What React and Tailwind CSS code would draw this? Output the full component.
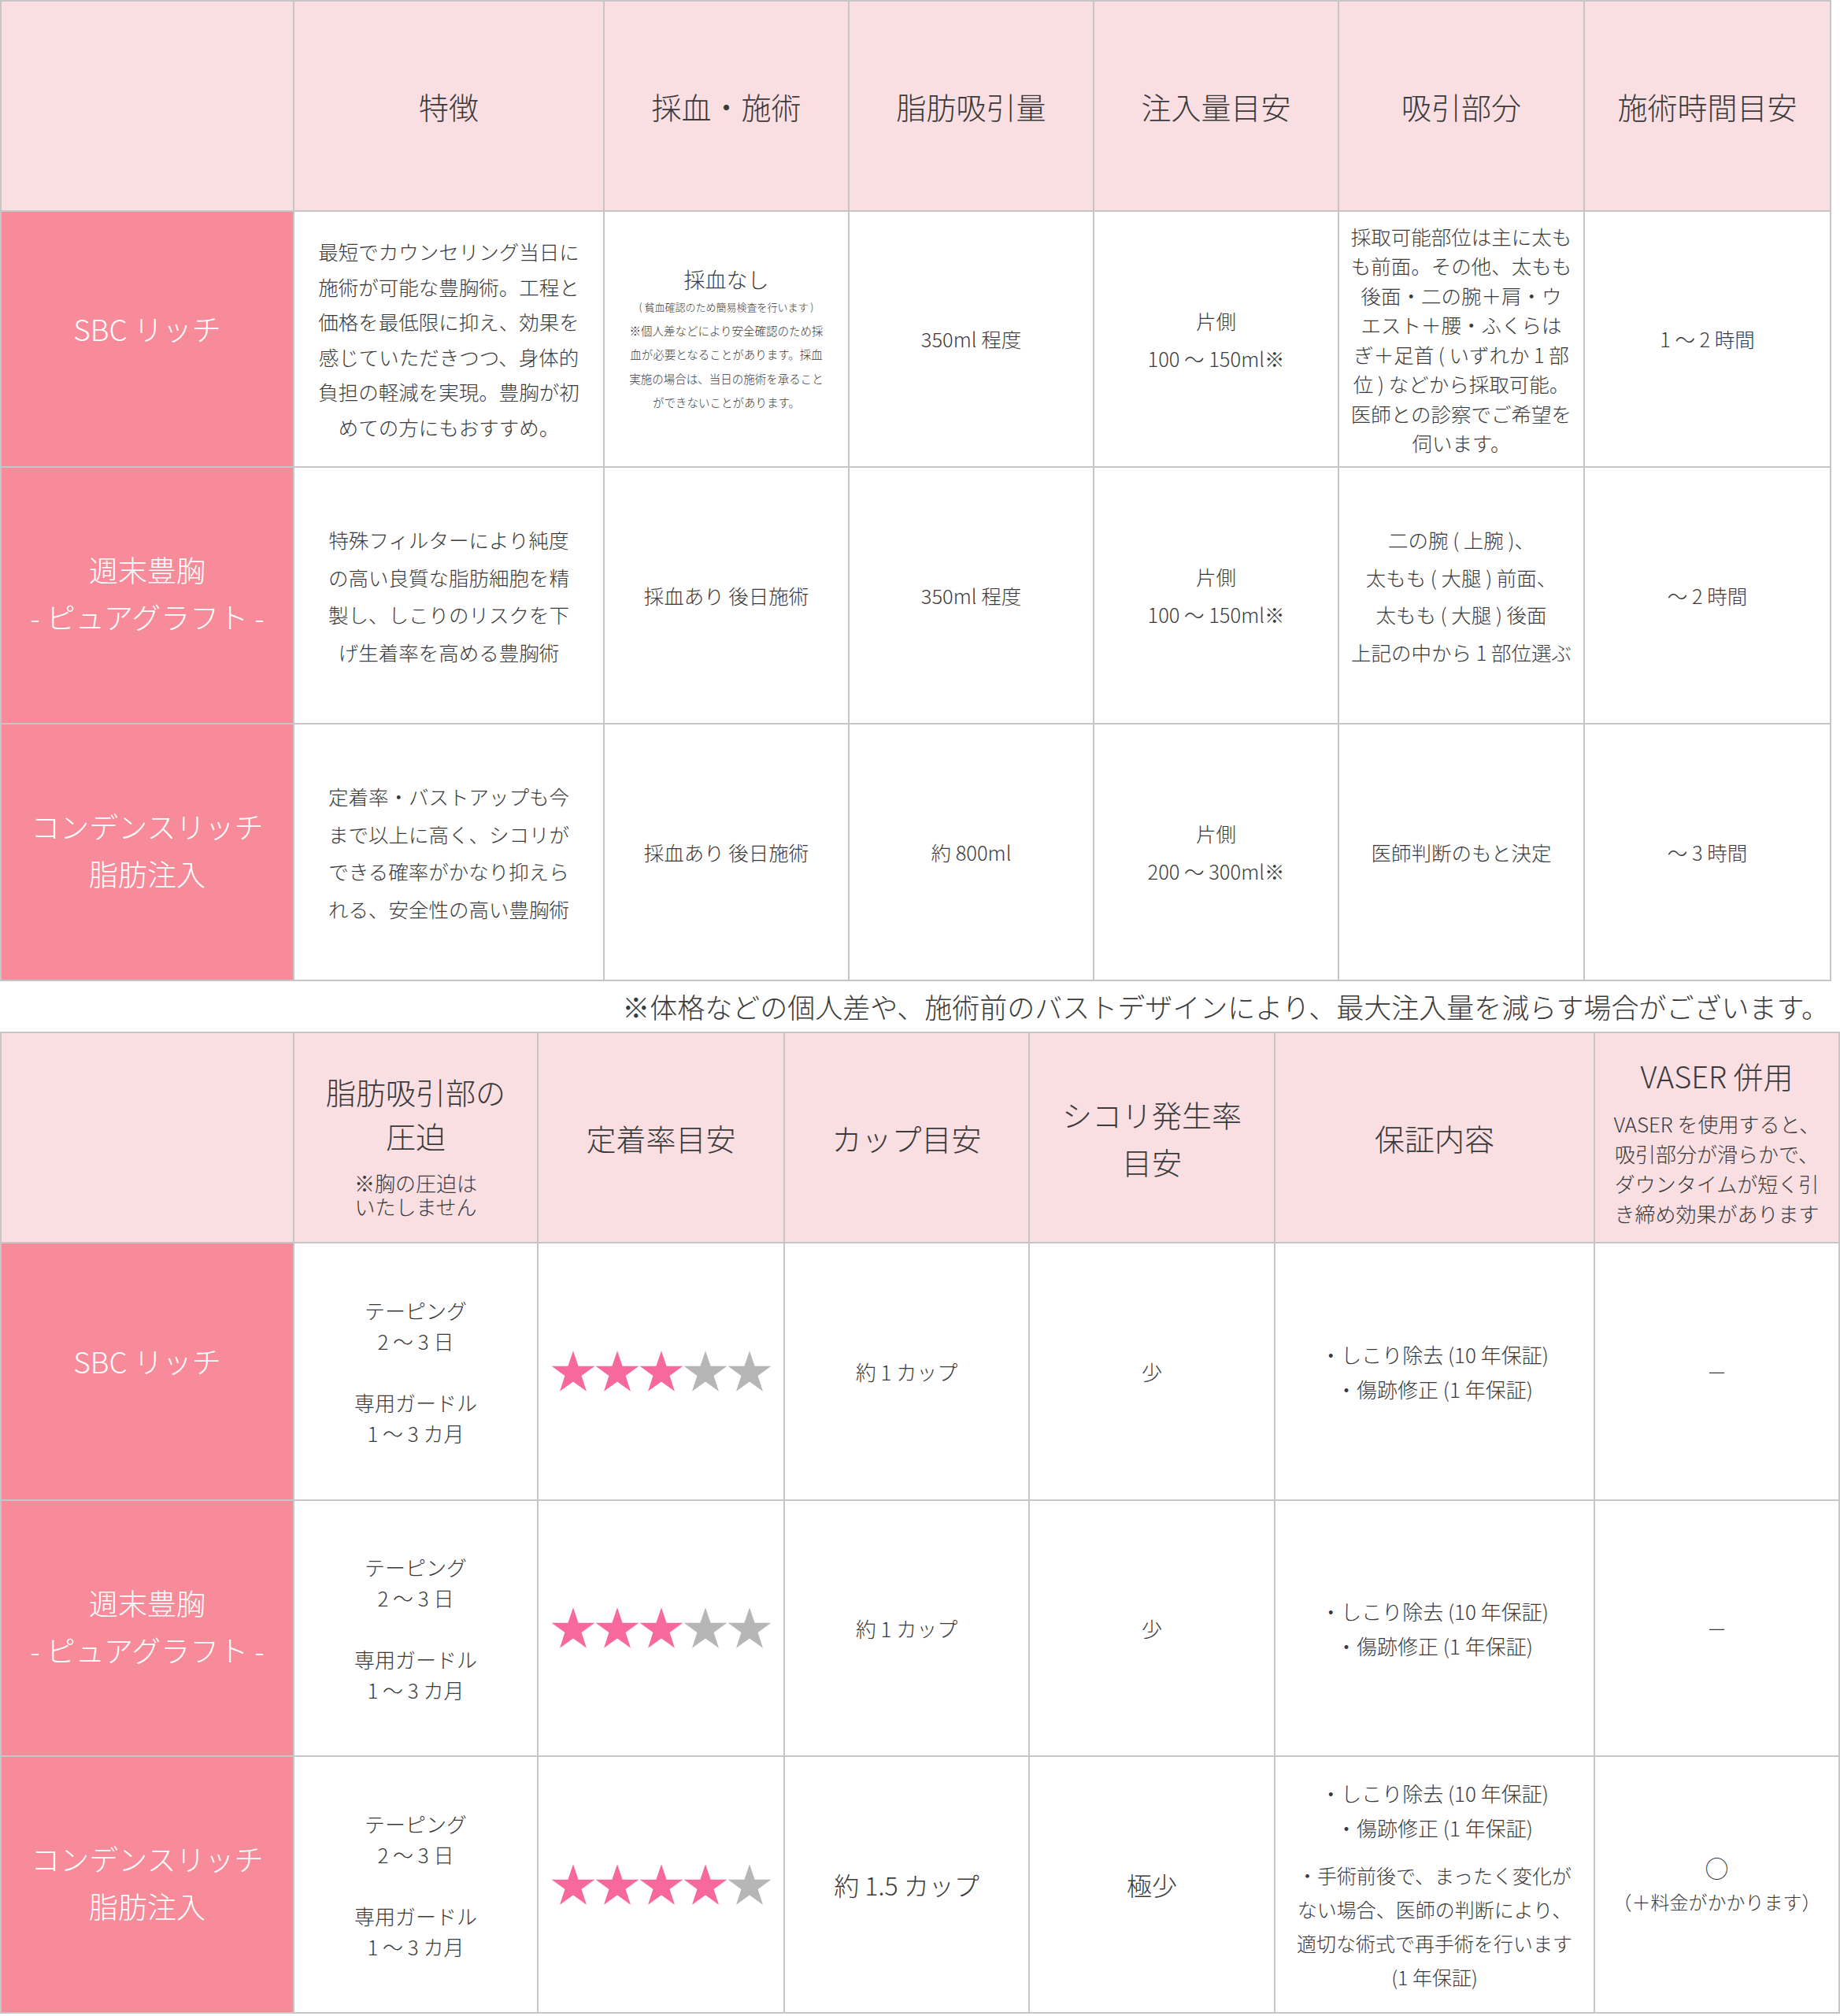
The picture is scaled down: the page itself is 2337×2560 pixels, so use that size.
import React from "react";

const STAR = "50,0 61.8,35.1 98.9,35.1 68.9,56.8 80.3,91.9 50,70.2 19.7,91.9 31.1,56.8 1.1,35.1 38.2,35.1";

function Stars({ n }) {
  return (
    <div className="flex items-center">
      {[0, 1, 2, 3, 4].map((i) => (
        <svg key={i} width="56" height="53" viewBox="0 0 100 94" className="block">
          <polygon points={STAR} fill={i < n ? "#f7699c" : "#b6b6b6"} />
        </svg>
      ))}
    </div>
  );
}

function Lines({ lines, className }) {
  return (
    <div className={className}>
      {lines.map((l, i) => (
        <div key={i} className="whitespace-nowrap">
          {l === "" ? "\u00a0" : l}
        </div>
      ))}
    </div>
  );
}

function Head({ children, className = "" }) {
  return (
    <div className={"bg-[#f9dee2] flex flex-col items-center justify-center text-center " + className}>
      {children}
    </div>
  );
}

function Label({ lines }) {
  return (
    <div
      className={
        "bg-[#f78b99] flex flex-col items-center justify-center text-center text-white text-[37px] leading-[60px] " +
        (lines.length === 1 ? "pb-[28px]" : "pb-[6px]")
      }
    >
      {lines.map((l, i) => (
        <div key={i} className="whitespace-nowrap">{l}</div>
      ))}
    </div>
  );
}

function Cell({ children, className = "" }) {
  return (
    <div className={"bg-white flex flex-col items-center justify-center text-center " + className}>
      {children}
    </div>
  );
}

export default function App() {
  return (
    <div className="w-[2337px] bg-white text-[#3a3a3a] font-light font-['Noto_Sans_CJK_JP','Noto_Sans',sans-serif]">
      {/* Table 1 */}
      <div className="w-[2326px] grid grid-cols-[370px_392px_309px_309px_309px_310px_311px] grid-rows-[265px_323px_324px_324px] gap-[2px] border-2 border-[#c6c6c6] bg-[#c6c6c6]">
        <Head />
        <Head className="text-[38px]">特徴</Head>
        <Head className="text-[38px]">採血・施術</Head>
        <Head className="text-[38px]">脂肪吸引量</Head>
        <Head className="text-[38px]">注入量目安</Head>
        <Head className="text-[38px]">吸引部分</Head>
        <Head className="text-[38px]">施術時間目安</Head>

        {/* Row 1 */}
        <Label lines={["SBC リッチ"]} />
        <Cell>
          <Lines
            className="text-[25.5px] leading-[44.5px]"
            lines={[
              "最短でカウンセリング当日に",
              "施術が可能な豊胸術。工程と",
              "価格を最低限に抑え、効果を",
              "感じていただきつつ、身体的",
              "負担の軽減を実現。豊胸が初",
              "めての方にもおすすめ。",
            ]}
          />
        </Cell>
        <Cell>
          <div className="text-[27px] leading-[40px] whitespace-nowrap">採血なし</div>
          <div className="text-[13px] leading-[30px] whitespace-nowrap">( 貧血確認のため簡易検査を行います )</div>
          <Lines
            className="text-[14.5px] leading-[30.5px]"
            lines={[
              "※個人差などにより安全確認のため採",
              "血が必要となることがあります。採血",
              "実施の場合は、当日の施術を承ること",
              "ができないことがあります。",
            ]}
          />
        </Cell>
        <Cell className="text-[25.5px]">350ml 程度</Cell>
        <Cell>
          <Lines className="text-[25.5px] leading-[48px]" lines={["片側", "100 〜 150ml※"]} />
        </Cell>
        <Cell>
          <Lines
            className="text-[25.5px] leading-[37.5px]"
            lines={[
              "採取可能部位は主に太も",
              "も前面。その他、太もも",
              "後面・二の腕＋肩・ウ",
              "エスト＋腰・ふくらは",
              "ぎ＋足首 ( いずれか 1 部",
              "位 ) などから採取可能。",
              "医師との診察でご希望を",
              "伺います。",
            ]}
          />
        </Cell>
        <Cell className="text-[25.5px]">1 〜 2 時間</Cell>

        {/* Row 2 */}
        <Label lines={["週末豊胸", "- ピュアグラフト -"]} />
        <Cell>
          <Lines
            className="text-[25.5px] leading-[47.5px]"
            lines={[
              "特殊フィルターにより純度",
              "の高い良質な脂肪細胞を精",
              "製し、しこりのリスクを下",
              "げ生着率を高める豊胸術",
            ]}
          />
        </Cell>
        <Cell className="text-[25.5px]">採血あり 後日施術</Cell>
        <Cell className="text-[25.5px]">350ml 程度</Cell>
        <Cell>
          <Lines className="text-[25.5px] leading-[48px]" lines={["片側", "100 〜 150ml※"]} />
        </Cell>
        <Cell>
          <Lines
            className="text-[25.5px] leading-[47.5px]"
            lines={[
              "二の腕 ( 上腕 )、",
              "太もも ( 大腿 ) 前面、",
              "太もも ( 大腿 ) 後面",
              "上記の中から 1 部位選ぶ",
            ]}
          />
        </Cell>
        <Cell className="text-[25.5px]">〜 2 時間</Cell>

        {/* Row 3 */}
        <Label lines={["コンデンスリッチ", "脂肪注入"]} />
        <Cell>
          <Lines
            className="text-[25.5px] leading-[47.5px]"
            lines={[
              "定着率・バストアップも今",
              "まで以上に高く、シコリが",
              "できる確率がかなり抑えら",
              "れる、安全性の高い豊胸術",
            ]}
          />
        </Cell>
        <Cell className="text-[25.5px]">採血あり 後日施術</Cell>
        <Cell className="text-[25.5px]">約 800ml</Cell>
        <Cell>
          <Lines className="text-[25.5px] leading-[48px]" lines={["片側", "200 〜 300ml※"]} />
        </Cell>
        <Cell className="text-[25.5px]">医師判断のもと決定</Cell>
        <Cell className="text-[25.5px]">〜 3 時間</Cell>
      </div>

      {/* Note */}
      <div className="h-[64px] flex items-center justify-end pr-[14px] text-[35px] whitespace-nowrap">
        ※体格などの個人差や、施術前のバストデザインにより、最大注入量を減らす場合がございます。
      </div>

      {/* Table 2 */}
      <div className="w-[2337px] grid grid-cols-[370px_308px_311px_309px_310px_404px_309px] grid-rows-[265px_325px_323px_324px] gap-[2px] border-2 border-[#c6c6c6] bg-[#c6c6c6]">
        <Head />
        <Head className="pt-[16px]">
          <Lines className="text-[38px] leading-[56px]" lines={["脂肪吸引部の", "圧迫"]} />
          <div className="text-[26px] leading-[30px] mt-[17px] whitespace-nowrap">
            ※胸の圧迫は
            <br />
            いたしません
          </div>
        </Head>
        <Head className="text-[38px]">定着率目安</Head>
        <Head className="text-[38px]">カップ目安</Head>
        <Head>
          <Lines className="text-[38px] leading-[60px]" lines={["シコリ発生率", "目安"]} />
        </Head>
        <Head className="text-[38px]">保証内容</Head>
        <Head className="pt-[18px]">
          <div className="text-[38px] leading-[38px] whitespace-nowrap">VASER 併用</div>
          <Lines
            className="text-[26px] leading-[38px] mt-[23px]"
            lines={["VASER を使用すると、", "吸引部分が滑らかで、", "ダウンタイムが短く引", "き締め効果があります"]}
          />
        </Head>

        {[
          { label: ["SBC リッチ"], stars: 3, cup: "約 1 カップ", shikori: "少", big: false },
          { label: ["週末豊胸", "- ピュアグラフト -"], stars: 3, cup: "約 1 カップ", shikori: "少", big: false },
          { label: ["コンデンスリッチ", "脂肪注入"], stars: 4, cup: "約 1.5 カップ", shikori: "極少", big: true },
        ].map((r, idx) => (
          <React.Fragment key={idx}>
            <Label lines={r.label} />
            <Cell>
              <Lines
                className="text-[26px] leading-[39px]"
                lines={["テーピング", "2 〜 3 日", "", "専用ガードル", "1 〜 3 カ月"]}
              />
            </Cell>
            <Cell>
              <Stars n={r.stars} />
            </Cell>
            <Cell className={r.big ? "text-[32px]" : "text-[26px]"}>{r.cup}</Cell>
            <Cell className={r.big ? "text-[32px]" : "text-[26px]"}>{r.shikori}</Cell>
            <Cell>
              <Lines
                className="text-[26px] leading-[44px]"
                lines={["・しこり除去 (10 年保証)", "・傷跡修正 (1 年保証)"]}
              />
              {r.big && (
                <Lines
                  className="text-[25px] leading-[43px] mt-[17px]"
                  lines={["・手術前後で、まったく変化が", "ない場合、医師の判断により、", "適切な術式で再手術を行います", "(1 年保証)"]}
                />
              )}
            </Cell>
            <Cell>
              {r.big ? (
                <>
                  <div className="text-[30px] leading-[44px]">○</div>
                  <div className="text-[24px] leading-[44px] whitespace-nowrap">（＋料金がかかります）</div>
                </>
              ) : (
                <div className="text-[26px]">－</div>
              )}
            </Cell>
          </React.Fragment>
        ))}
      </div>
    </div>
  );
}
